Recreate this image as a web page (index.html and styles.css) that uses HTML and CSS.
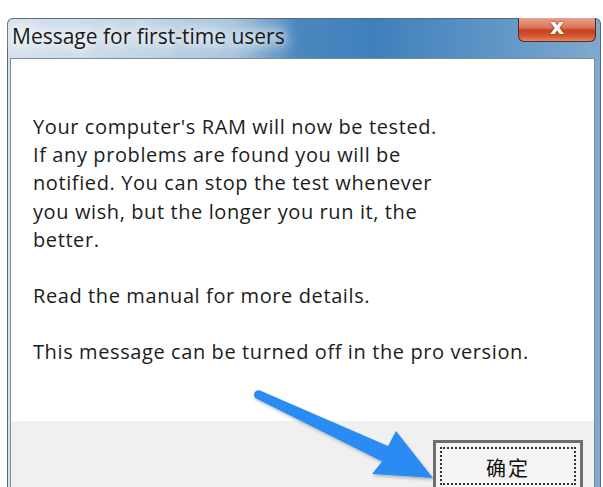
FILE: index.html
```html
<!DOCTYPE html>
<html>
<head>
<meta charset="utf-8">
<link rel="stylesheet" href="styles.css">
</head>
<body>
<div class="page">
  <div class="window">
    <div class="titlebar">
      <span class="title">Message for first-time users</span>
      <div class="close"><span class="x">x</span></div>
    </div>
    <div class="client">
      <div class="message">
        <p>Your computer's RAM will now be tested.<br>If any problems are found you will be<br>notified. You can stop the test whenever<br>you wish, but the longer you run it, the<br>better.</p>
        <p>Read the manual for more details.</p>
        <p>This message can be turned off in the pro version.</p>
      </div>
      <div class="footer">
        <div class="btn"><div class="focus">确定</div></div>
      </div>
    </div>
  </div>
  <svg class="arrow" width="603" height="487" viewBox="0 0 603 487">
    <defs>
      <filter id="sh" x="-10%" y="-10%" width="130%" height="130%">
        <feDropShadow dx="1" dy="2" stdDeviation="1.5" flood-color="#000" flood-opacity="0.25"/>
      </filter>
    </defs>
    <path filter="url(#sh)" fill="#2b8cf2" d="M260 390.5 L388 446 L396 431 L433 478 L372 474 L382 461.5 L257 399 A4.4 4.4 0 0 1 260 390.5 Z"/>
  </svg>
</div>
</body>
</html>
```
FILE: styles.css
```css
html, body {
  margin: 0;
  padding: 0;
  background: #fff;
  overflow: hidden;
}
.page {
  position: relative;
  width: 603px;
  height: 487px;
  overflow: hidden;
  padding-top: 18px;
  box-sizing: border-box;
}
.window {
  margin-left: 7px;
  width: 594px;
  height: 480px;
  box-sizing: border-box;
  border: 1px solid #5b6671;
  border-bottom: none;
  border-radius: 6px 6px 0 0;
  padding: 0 5px 0 2px;
  background: linear-gradient(90deg, #d6e3ee 0%, #c3d6e6 22%, #a9c6de 38%, #4a87bf 49%, #3f80bb 62%, #5b93c5 80%, #7fa9cf 100%);
}
.titlebar {
  height: 39px;
  display: flex;
  justify-content: space-between;
  align-items: flex-start;
}
.title {
  font-family: "Open Sans", "DejaVu Sans", sans-serif;
  font-size: 21px;
  color: #1a1a1a;
  margin-top: 3px;
  margin-left: 2px;
  text-shadow: 0 0 10px #fff, 0 0 14px #fff, 0 0 18px rgba(255,255,255,0.9);
}
.close {
  width: 78px;
  height: 24px;
  margin-top: -1px;
  margin-right: -1px;
  box-sizing: border-box;
  border: 1px solid #5a2a20;
  border-top: none;
  border-radius: 0 0 6px 6px;
  background: linear-gradient(180deg, #e8a18c 0%, #d9775e 40%, #c7401e 55%, #d45a32 80%, #e08a6a 100%);
  display: flex;
  justify-content: center;
  align-items: center;
}
.x {
  font-family: "DejaVu Sans", sans-serif;
  font-weight: bold;
  font-size: 22px;
  line-height: 1;
  color: #fff;
  margin-top: -5px;
  text-shadow: 0 0 2px #6a2010;
}
.client {
  height: 441px;
  box-sizing: border-box;
  border: 1px solid #7d8b98;
  border-bottom: none;
  background: #fff;
  display: flex;
  flex-direction: column;
}
.message {
  height: 362px;
  box-sizing: border-box;
  padding: 54px 0 0 22px;
  font-family: "Open Sans", "DejaVu Sans", sans-serif;
  font-size: 20px;
  letter-spacing: 0.6px;
  line-height: 28.2px;
  color: #1c1c1c;
}
.message p {
  margin: 0 0 28px 0;
}
.footer {
  flex: 1;
  background: #f0f0f0;
  display: flex;
  justify-content: flex-end;
  align-items: flex-start;
  padding: 19px 11px 0 0;
}
.btn {
  width: 150px;
  height: 52px;
  box-sizing: border-box;
  border: 3px solid #6e6e6e;
  background: #f4f4f4;
  padding: 4px;
}
.focus {
  height: 100%;
  box-sizing: border-box;
  border: 2px dotted #333;
  display: flex;
  justify-content: center;
  padding-top: 4px;
  font-family: "Noto Sans CJK SC", sans-serif;
  font-size: 20px;
  color: #111;
  letter-spacing: 2px;
}
.arrow {
  position: absolute;
  left: 0;
  top: 0;
  pointer-events: none;
}
```
